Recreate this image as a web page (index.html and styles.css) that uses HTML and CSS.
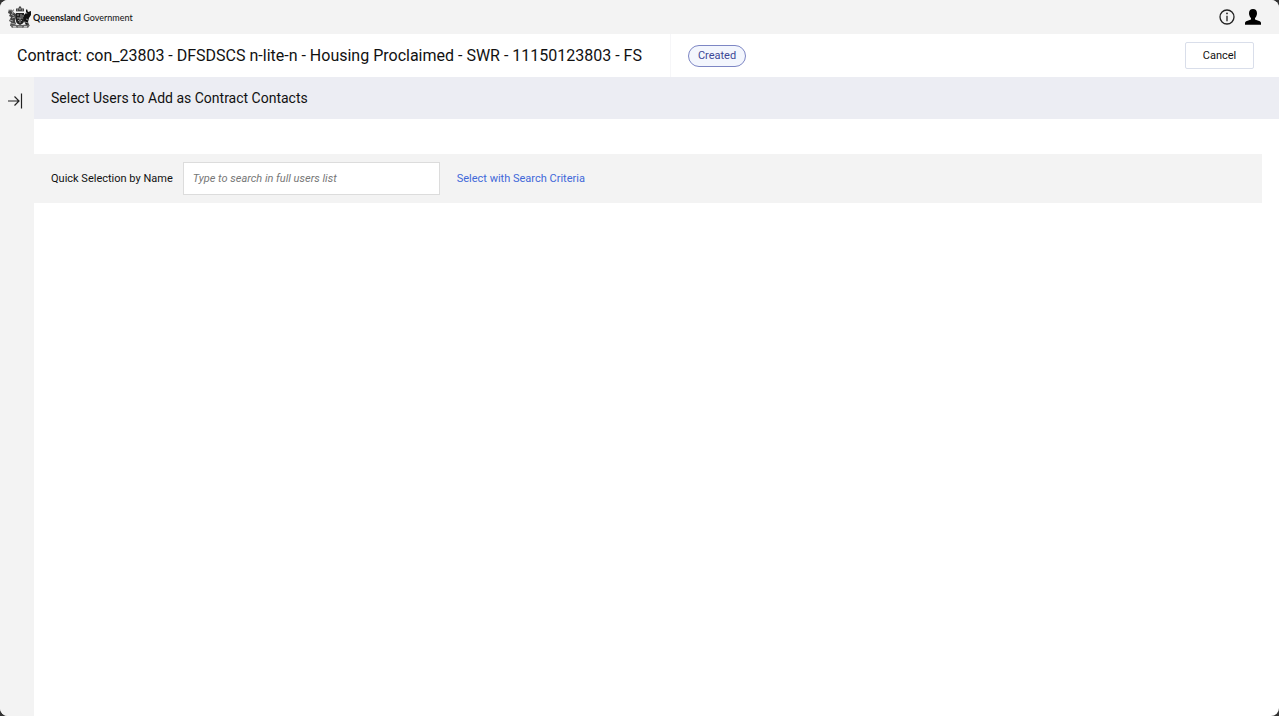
FILE: index.html
```html
<!DOCTYPE html>
<html lang="en">
<head>
    <meta charset="UTF-8">
    <meta name="viewport" content="width=device-width, initial-scale=1.0">
    <title>Contract Contacts | Queensland Government</title>
    <link rel="stylesheet" href="styles.css">
</head>
<body>
    <div class="app">
        <header class="topbar">
            <a href="#" class="logo">
                <svg class="crest" viewBox="0 0 24 23" aria-hidden="true">
                    <!-- crown and wreath -->
                    <path d="M8 3l1-1 1 1 1-2 1-1 1 1 1 2 1-1 1 1v3H8z" fill="#444"/>
                    <path d="M9 4h1M11 3h2M14 4h1M8 5.500h8" stroke="#ddd" stroke-width=".7"/>
                    <!-- deer -->
                    <path d="M1 3l1 2 1-2 1 2 2-2-1 3 3 2v4l-1 3 1 3-3 2H2l1-4-2-1 2-4-2-1 1-2-2-1z" fill="#444"/>
                    <path d="M3 8l3 2M4 12l3-1M3 17l4 1M4 5l1 3M2 14l3 1" stroke="#ccc" stroke-width=".7"/>
                    <!-- brolga -->
                    <path d="M18 4l1-1 1 3 3-1v4l-2 3-1 4 1 3h-3l-2-4V9l2-2z" fill="#111"/>
                    <path d="M18 13l2 1M17 16l3 1M18 6l1 2" stroke="#bbb" stroke-width=".7"/>
                    <!-- shield -->
                    <path d="M8 7h8v8c0 2-2 3-4 4-2-1-4-2-4-4z" fill="#222"/>
                    <path d="M9 9h2M13 8v3M14 10h2M9 12h6M10 14l1 1M13 14l1 1M12 12v5" stroke="#ccc" stroke-width=".7"/>
                    <!-- scroll -->
                    <path d="M2 19c3-1 5 0 10 0s7-1 10 0l-2 3c-3-1-4 0-8 0s-5-1-8 0z" fill="#666"/>
                    <path d="M5 20.500h3M10 21h4M16 20.500h3" stroke="#ddd" stroke-width=".8" fill="none"/>
                </svg>
                <span class="logo-text"><b>Queensland</b> Government</span>
            </a>
            <div class="topbar-actions">
                <button type="button" class="icon-btn" aria-label="Information">
                    <svg width="16" height="16" viewBox="0 0 16 16" fill="none" stroke="#222">
                        <circle cx="8" cy="8" r="7" stroke-width="1.3"/>
                        <path d="M8 6.800v5.400" stroke-width="1.3"/>
                        <circle cx="8" cy="4.4" r=".9" fill="#222" stroke="none"/>
                    </svg>
                </button>
                <button type="button" class="icon-btn" aria-label="User profile">
                    <svg width="16" height="16" viewBox="0 0 16 16" fill="#000">
                        <path d="M8 0c2.500 0 4 1.500 4 4.200 0 1-.2 2.200-.8 3.200-.4.700-.9 1.200-1.200 1.600v1.400l4.800 1.800c.8.300 1.200.9 1.200 1.700V15.700H0V13.900c0-.8.4-1.400 1.200-1.700L6 10.400V9c-.3-.4-.8-.9-1.200-1.600C4.200 6.400 4 5.200 4 4.200 4 1.500 5.500 0 8 0z"/>
                    </svg>
                </button>
            </div>
        </header>

        <div class="titlebar">
            <h1>Contract: con_23803 - DFSDSCS n-lite-n - Housing Proclaimed - SWR - 11150123803 - FS</h1>
            <div class="status">
                <span class="badge">Created</span>
            </div>
            <button type="button" class="cancel-btn">Cancel</button>
        </div>

        <div class="content">
            <aside class="sidebar">
                <button type="button" class="icon-btn" aria-label="Expand menu">
                    <svg width="16" height="16" viewBox="0 0 16 16" fill="none" stroke="#222" stroke-width="1.2">
                        <path d="M1 8h11M7.500 3.500L12 8l-4.500 4.500M14.500 .5v15"/>
                    </svg>
                </button>
            </aside>
            <main>
                <h2>Select Users to Add as Contract Contacts</h2>
                <form class="search-row">
                    <label for="user-search">Quick Selection by Name</label>
                    <input type="text" id="user-search" placeholder="Type to search in full users list">
                    <a href="#">Select with Search Criteria</a>
                </form>
            </main>
        </div>
    </div>
</body>
</html>
```

FILE: styles.css
```css
:root {
    --bar-color: #f3f3f3;
    --heading-color: #ecedf3;
    --text-color: #111;
    --link-color: #4168d9;
    --badge-color: #3c4796;
}

* {
    margin: 0;
    padding: 0;
    box-sizing: border-box;
}

body {
    background-color: #333;
    color: var(--text-color);
    font-family: Roboto, "Liberation Sans", sans-serif;
    font-size: 11px;
}

.app {
    display: flex;
    flex-direction: column;
    min-height: 100vh;
    background-color: #fff;
    border-radius: 8px;
    overflow: hidden;
}

.topbar {
    display: flex;
    justify-content: space-between;
    align-items: center;
    height: 34px;
    padding: 0 18px 0 8px;
    background-color: var(--bar-color);
}

.logo {
    display: flex;
    align-items: center;
    gap: 1px;
    color: #111;
    text-decoration: none;
}

.crest {
    width: 24px;
    height: 23px;
}

.logo-text {
    font-family: Lato, "Open Sans", sans-serif;
    font-size: 9px;
}

.topbar-actions {
    display: flex;
    gap: 10px;
}

.icon-btn {
    display: flex;
    border: none;
    background: none;
    cursor: pointer;
}

.titlebar {
    display: flex;
    align-items: center;
    height: 43px;
    padding: 0 25px 0 17px;
}

h1 {
    font-size: 16px;
    font-weight: 400;
    padding-right: 28px;
}

.status {
    display: flex;
    flex: 1;
    align-items: center;
    align-self: stretch;
    padding-left: 17px;
    border-left: 1px solid #f6f6f8;
}

.badge {
    padding: 0 9px;
    border: 1px solid #7d86c4;
    border-radius: 11px;
    background-color: #f3f6fd;
    color: var(--badge-color);
    line-height: 20px;
}

.cancel-btn {
    width: 69px;
    height: 27px;
    border: 1px solid #d9deea;
    border-radius: 2px;
    background-color: #fff;
    color: var(--text-color);
    font: inherit;
    cursor: pointer;
}

.content {
    display: flex;
    flex: 1;
}

.sidebar {
    width: 34px;
    padding: 16px 0 0 7px;
    background-color: var(--bar-color);
}

main {
    flex: 1;
}

h2 {
    padding: 0 17px;
    background-color: var(--heading-color);
    font-size: 14px;
    font-weight: 400;
    line-height: 42px;
}

.search-row {
    display: flex;
    align-items: center;
    margin: 35px 17px 0 0;
    padding: 8px 17px;
    background-color: var(--bar-color);
}

.search-row input {
    width: 257px;
    height: 33px;
    margin: 0 17px 0 10px;
    padding: 0 9px;
    border: 1px solid #dcdcdc;
    background-color: #fff;
    color: var(--text-color);
    font: inherit;
}

.search-row input::placeholder {
    color: #777;
    font-style: italic;
}

.search-row a {
    color: var(--link-color);
    text-decoration: none;
}
```
